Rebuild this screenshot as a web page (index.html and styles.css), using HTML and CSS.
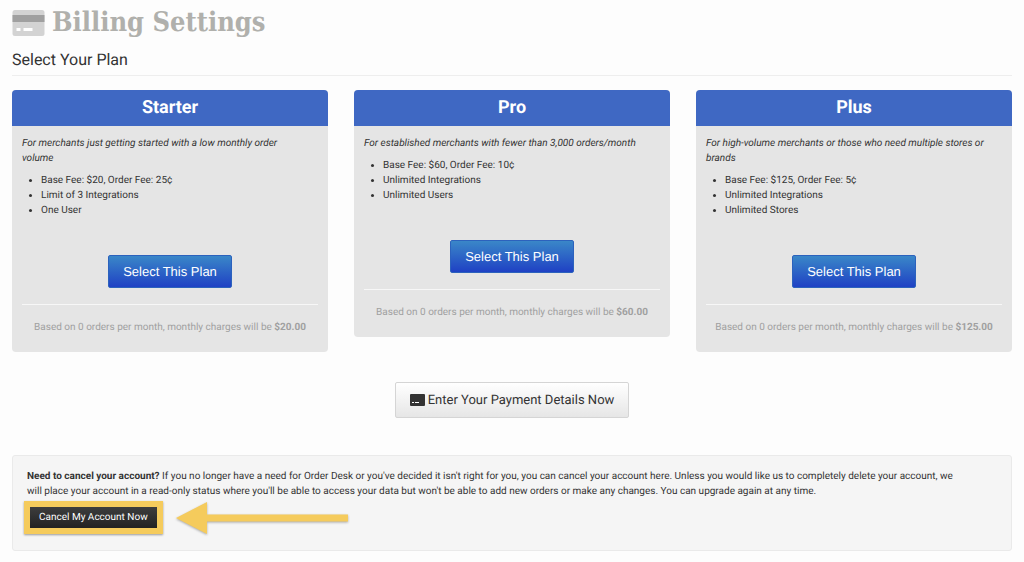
FILE: index.html
```html
<!DOCTYPE html>
<html lang="en">
<head>
  <meta charset="UTF-8" />
  <meta name="viewport" content="width=device-width, initial-scale=1" />
  <title>Billing Settings</title>
  <link rel="stylesheet" href="styles.css">
</head>
<body>
  <header class="page-header">
    <svg class="header-icon" viewBox="0 0 32 26" aria-hidden="true">
      <rect width="32" height="26" rx="2.5" fill="#d3d3d3" />
      <rect y="5" width="32" height="7" fill="#a0a0a0" />
      <path d="M4 18h4v3H4zM11 18h9v3h-9z" fill="#fff" />
    </svg>
    <h1>Billing Settings</h1>
  </header>

  <h2>Select Your Plan</h2>

  <div class="plans">
    <section class="plan">
      <h3>Starter</h3>
      <p class="plan-intro">For merchants just getting started with a low monthly order volume</p>
      <ul>
        <li>Base Fee: $20, Order Fee: 25¢</li>
        <li>Limit of 3 Integrations</li>
        <li>One User</li>
      </ul>
      <button type="button" class="btn-select">Select This Plan</button>
      <hr>
      <p class="plan-charge">Based on 0 orders per month, monthly charges will be <strong>$20.00</strong></p>
    </section>

    <section class="plan">
      <h3>Pro</h3>
      <p class="plan-intro">For established merchants with fewer than 3,000 orders/month</p>
      <ul>
        <li>Base Fee: $60, Order Fee: 10¢</li>
        <li>Unlimited Integrations</li>
        <li>Unlimited Users</li>
      </ul>
      <button type="button" class="btn-select">Select This Plan</button>
      <hr>
      <p class="plan-charge">Based on 0 orders per month, monthly charges will be <strong>$60.00</strong></p>
    </section>

    <section class="plan">
      <h3>Plus</h3>
      <p class="plan-intro">For high-volume merchants or those who need multiple stores or brands</p>
      <ul>
        <li>Base Fee: $125, Order Fee: 5¢</li>
        <li>Unlimited Integrations</li>
        <li>Unlimited Stores</li>
      </ul>
      <button type="button" class="btn-select">Select This Plan</button>
      <hr>
      <p class="plan-charge">Based on 0 orders per month, monthly charges will be <strong>$125.00</strong></p>
    </section>
  </div>

  <button type="button" class="btn-payment">
    <svg class="card-icon" viewBox="0 0 15 12" aria-hidden="true">
      <rect width="15" height="12" rx="1" fill="#333" />
      <path d="M2 8h2v1H2zM5 8h4v1H5z" fill="#fff" />
    </svg>
    Enter Your Payment Details Now
  </button>

  <div class="well">
    <p><strong>Need to cancel your account?</strong> If you no longer have a need for Order Desk or you've decided it isn't right for you, you can cancel your account here. Unless you would like us to completely delete your account, we<br> will place your account in a read-only status where you'll be able to access your data but won't be able to add new orders or make any changes. You can upgrade again at any time.</p>
    <div class="cancel-row">
      <button type="button" class="btn-cancel">Cancel My Account Now</button>
      <svg class="arrow" viewBox="0 0 172 32" aria-hidden="true">
        <path d="M0 16L31 0v12.500h141v7H31V32z" fill="#f5cb5c" />
      </svg>
    </div>
  </div>
</body>
</html>
```
FILE: styles.css
```css
* {
  box-sizing: border-box;
}

body {
  font-family: Roboto, "Liberation Sans", sans-serif;
  font-size: 10px;
  line-height: 15px;
  text-rendering: geometricPrecision;
  color: #333;
  background: #fdfdfd;
  margin: 0;
  padding: 7px 12px;
}

h1, h2, h3, p, ul {
  margin: 0;
}

button {
  font-family: inherit;
  text-rendering: inherit;
  cursor: pointer;
}

.page-header {
  display: flex;
  align-items: center;
  gap: 7px;
  height: 32px;
}

.header-icon {
  width: 33px;
  height: 26px;
}

h1 {
  font-family: "DejaVu Serif Condensed", "DejaVu Serif", serif;
  font-size: 27px;
  line-height: 32px;
  color: #b0b0ac;
}

h2 {
  font-size: 16px;
  font-weight: normal;
  line-height: 20px;
  margin-top: 11px;
  padding-bottom: 5px;
  border-bottom: 1px solid #eee;
}

.plans {
  display: grid;
  grid-template-columns: repeat(3, 1fr);
  gap: 26px;
  align-items: start;
  margin-top: 14px;
}

.plan {
  background: #e5e5e5;
  border-radius: 4px;
  padding-bottom: 17px;
  overflow: hidden;
}

.plan h3 {
  background: #3f68c3;
  color: #fff;
  font-size: 18px;
  line-height: 36px;
  text-align: center;
}

.plan-intro {
  padding: 10px 20px 0 10px;
  font-style: italic;
}

.plan ul {
  margin-top: 7px;
  padding-left: 29px;
}

.btn-select {
  display: block;
  height: 33px;
  margin: 37px auto 16px;
  padding: 0 14px;
  font-family: "Liberation Sans", sans-serif;
  font-size: 13px;
  color: #fff;
  background: linear-gradient(#3a87c8, #1f41c4);
  border: 1px solid #2c62bd;
  border-radius: 2px;
}

.plan hr {
  margin: 0 10px 15px;
  border: 0;
  border-top: 1px solid #f7f7f7;
}

.plan-charge {
  color: #a0a0a0;
  text-align: center;
}

.btn-payment {
  display: flex;
  align-items: center;
  gap: 3px;
  height: 36px;
  margin: 30px auto 37px;
  padding: 0 14px;
  font-size: 13px;
  color: #333;
  background: linear-gradient(#fff, #e6e6e6);
  border: 1px solid #d5d5d5;
  border-radius: 2px;
}

.card-icon {
  width: 15px;
  height: 12px;
}

.well {
  padding: 13px 14px 14px;
  background: #f5f5f5;
  border: 1px solid #eaeaea;
  border-radius: 3px;
}

.cancel-row {
  display: flex;
  align-items: center;
  gap: 19px;
  padding: 8px 3px;
}

.btn-cancel {
  height: 21px;
  padding: 0 9px;
  font-size: 10px;
  color: #fff;
  background: linear-gradient(#3d3d3d, #222);
  border: 0;
  box-shadow: 0 0 0 6px #f5cb5c, 0 1px 2px 6px #999;
}

.arrow {
  width: 172px;
  height: 32px;
  margin: -6px 0;
  filter: drop-shadow(0 1px 1px #aaa);
}
```
